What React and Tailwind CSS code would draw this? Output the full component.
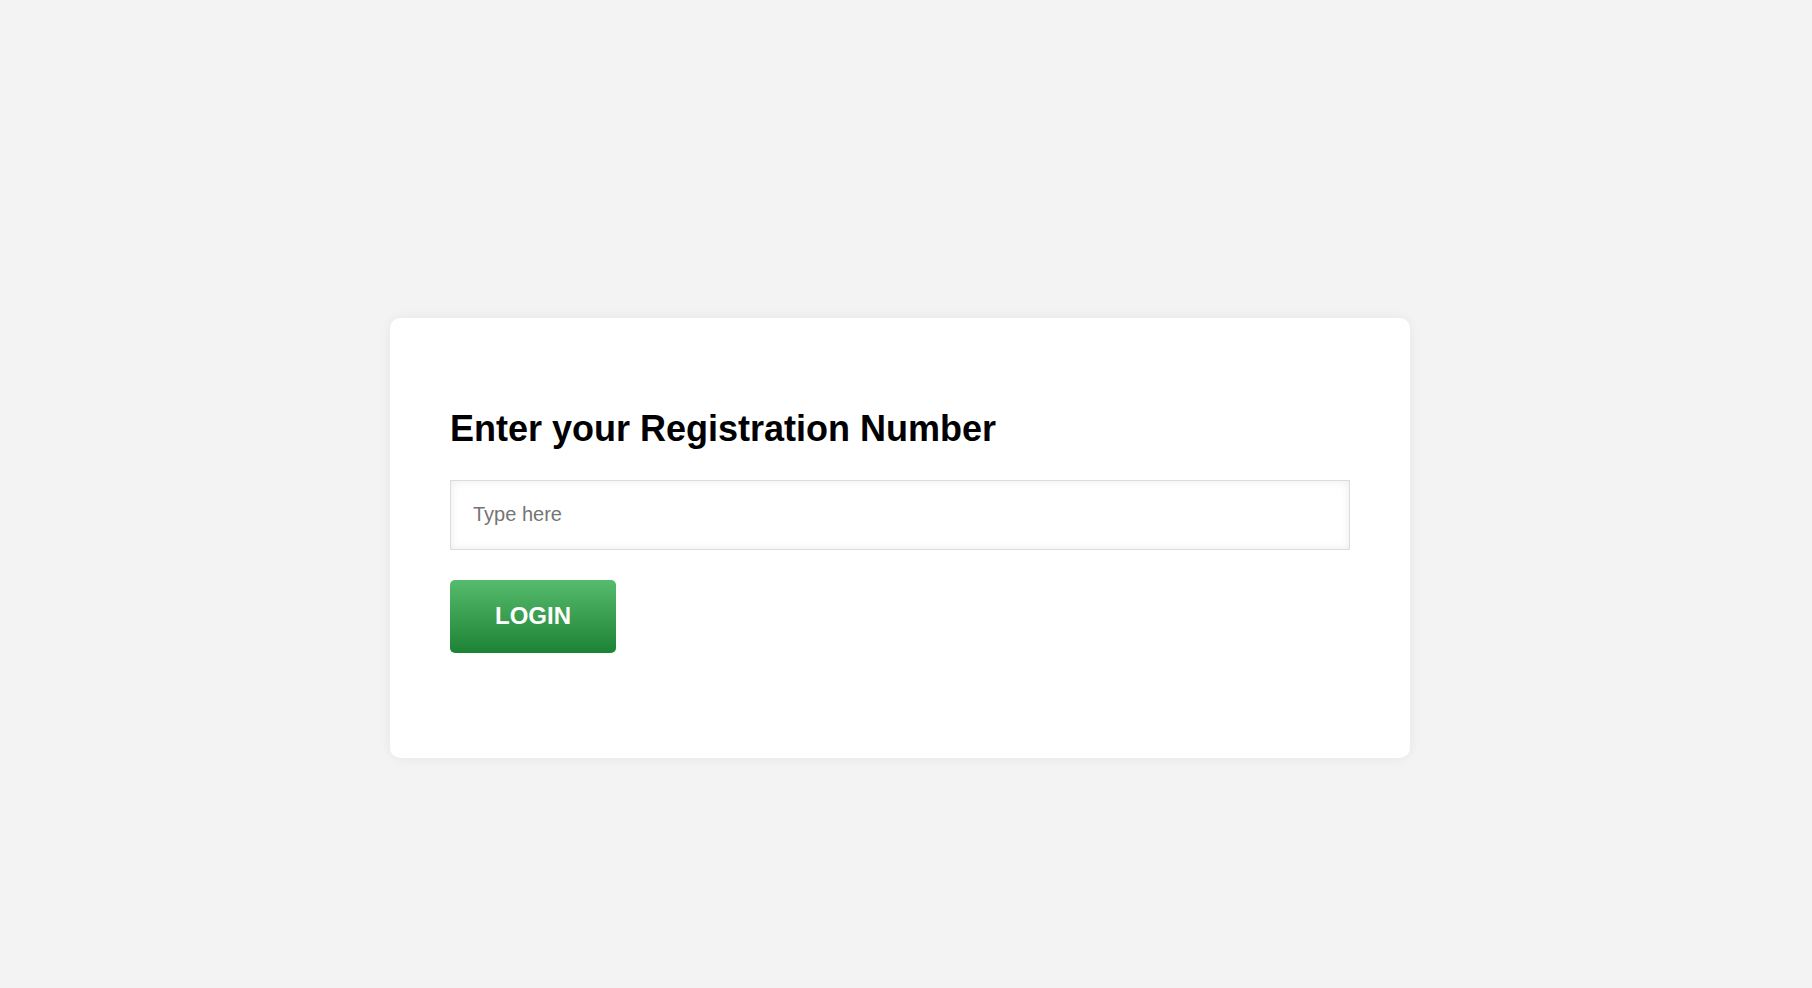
export default function App() {
  return (
    <div className="min-h-screen w-full bg-[#f3f3f3] pt-[318px] font-['Liberation_Sans',Arial,sans-serif]">
      <div className="ml-[390px] w-[1020px] h-[440px] bg-white rounded-[10px] shadow-[0_0_12px_rgba(0,0,0,0.06)] px-[60px] pt-[90px]">
        <h2 className="text-[36px] leading-[41px] font-bold text-black">Enter your Registration Number</h2>
        <input
          type="text"
          placeholder="Type here"
          className="mt-[31px] block w-[900px] h-[70px] border border-[#dcdcdc] bg-white px-[22px] pb-[2px] text-[20px] text-[#333] placeholder:text-[#757575] shadow-[inset_0_0_10px_rgba(0,0,0,0.08)] outline-none"
        />
        <button className="mt-[30px] block w-[166px] h-[73px] pb-[2px] rounded-[5px] bg-gradient-to-b from-[#55bb6d] to-[#1c8334] text-white text-[24px] font-bold">
          LOGIN
        </button>
      </div>
    </div>
  );
}
